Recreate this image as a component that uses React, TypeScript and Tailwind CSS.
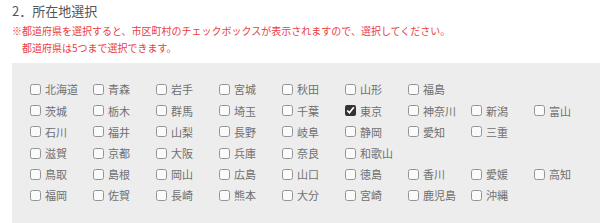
const rows: string[][] = [
  ['北海道', '青森', '岩手', '宮城', '秋田', '山形', '福島'],
  ['茨城', '栃木', '群馬', '埼玉', '千葉', '東京', '神奈川', '新潟', '富山'],
  ['石川', '福井', '山梨', '長野', '岐阜', '静岡', '愛知', '三重'],
  ['滋賀', '京都', '大阪', '兵庫', '奈良', '和歌山'],
  ['鳥取', '島根', '岡山', '広島', '山口', '徳島', '香川', '愛媛', '高知'],
  ['福岡', '佐賀', '長崎', '熊本', '大分', '宮崎', '鹿児島', '沖縄'],
];

const font = { fontFamily: '"Noto Sans CJK JP", "Noto Sans", sans-serif' };

export default function App() {
  return (
    <div className="w-[600px] h-[223px] bg-white overflow-hidden pl-3" style={font}>
      <h3 className="text-[13px] leading-[20px] text-[#555] pt-[1px]">2．所在地選択</h3>
      <p className="text-[#ec3b3f] text-[10px] leading-[17px] mt-[1px]">
        ※都道府県を選択すると、市区町村のチェックボックスが表示されますので、選択してください。
        <br />
        <span className="pl-[10px]">都道府県は5つまで選択できます。</span>
      </p>
      <div className="mt-[7px] bg-[#ededed] h-[200px] pl-[18px] pt-[16px]">
        {rows.map((row, i) => (
          <div key={i} className="flex h-[21.2px] items-center">
            {row.map((name) => (
              <label key={name} className="w-[63px] flex items-center gap-[4px] text-[11px] text-[#707070]">
                <input
                  type="checkbox"
                  defaultChecked={name === '東京'}
                  className={name === '東京' ? 'm-0 w-[11px] h-[11px] accent-[#333]' : 'm-0 w-[11px] h-[11px] opacity-75'}
                />
                {name}
              </label>
            ))}
          </div>
        ))}
      </div>
    </div>
  );
}
